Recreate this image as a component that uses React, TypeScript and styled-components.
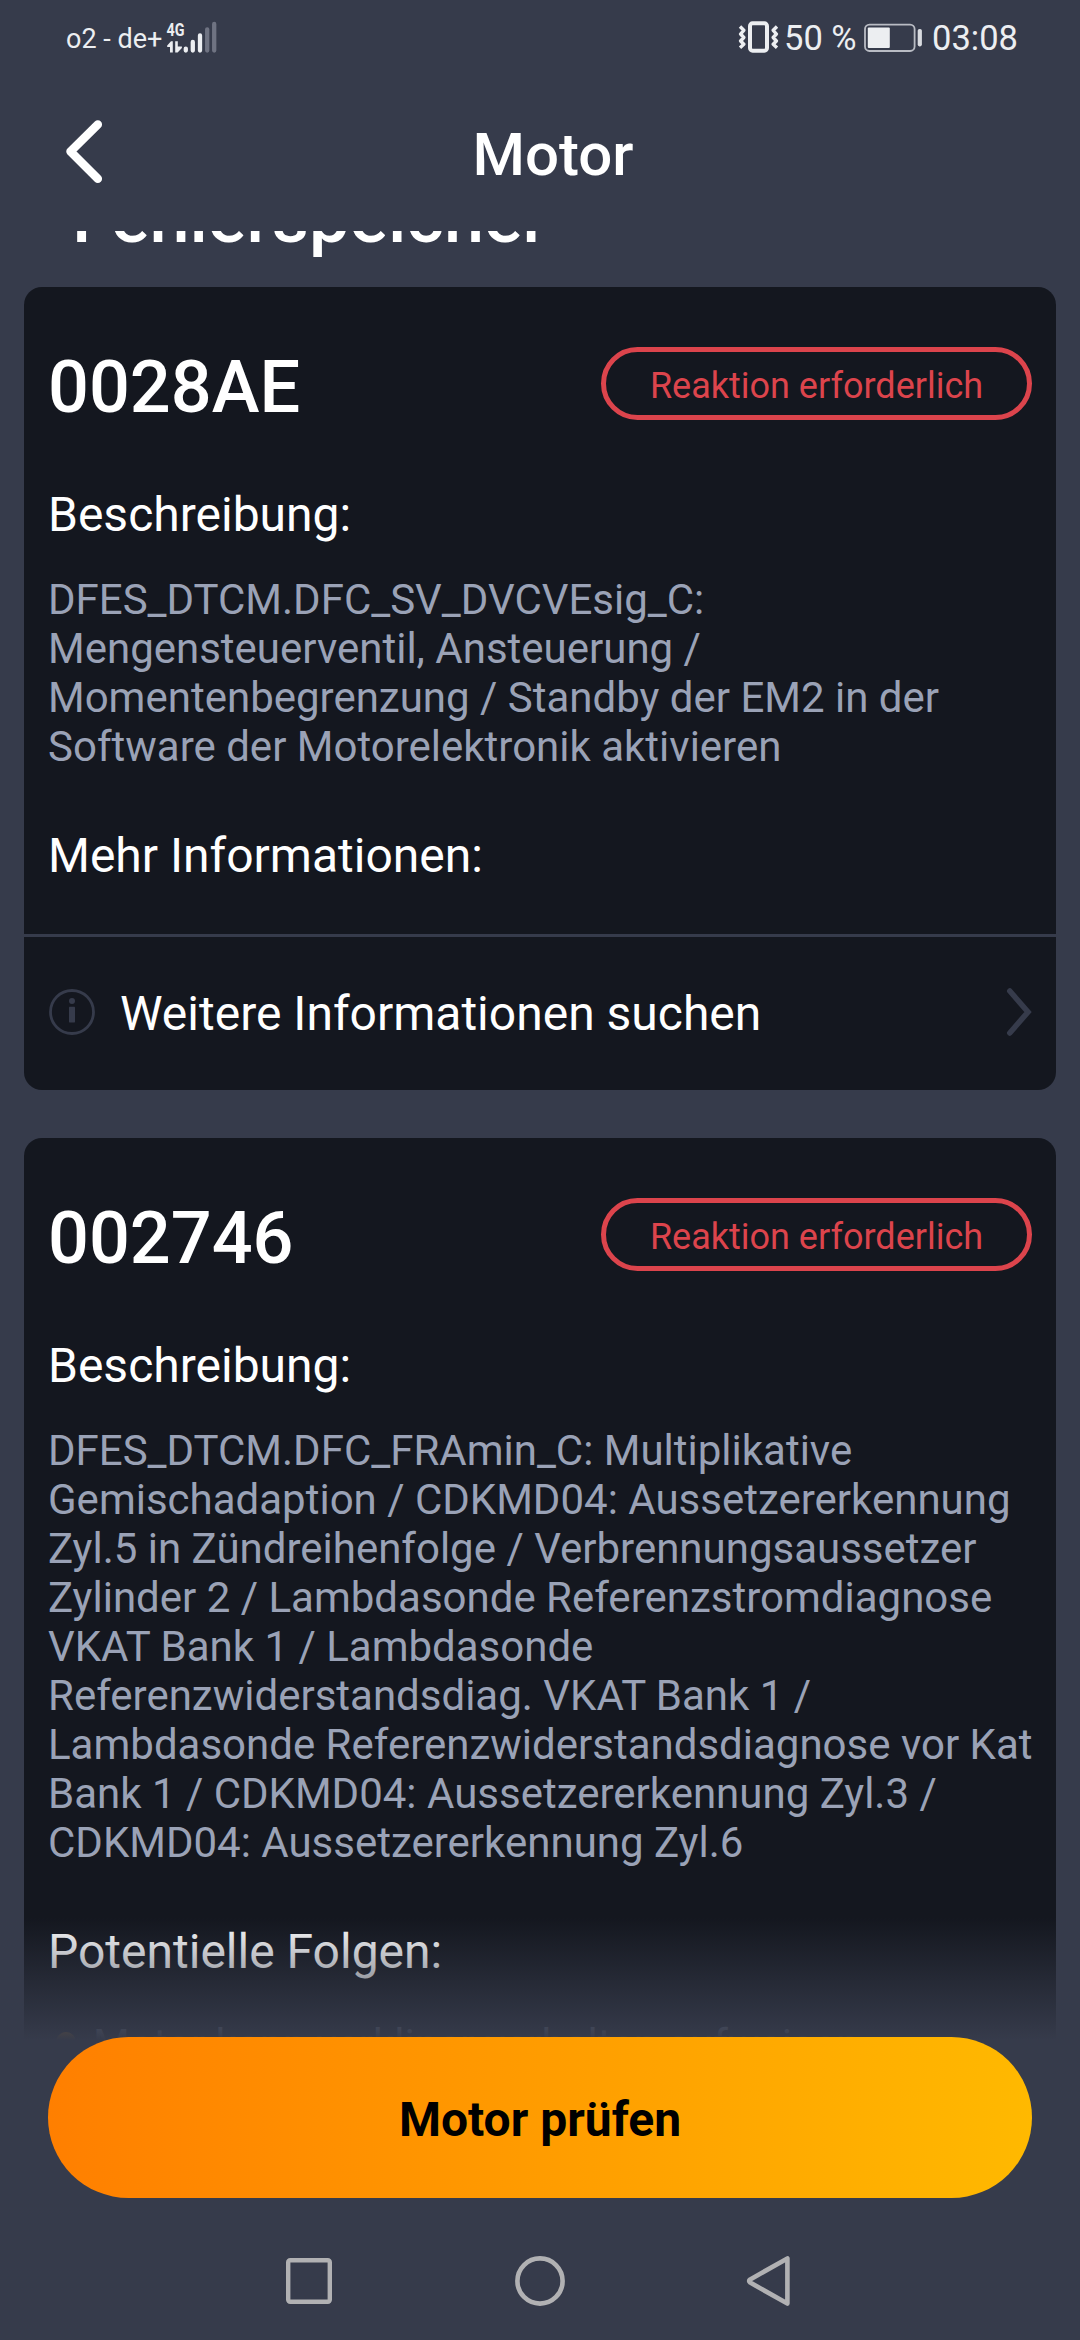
import React from "react";
import styled, { createGlobalStyle } from "styled-components";

const color = {
  page: "#363b4b",
  card: "#14171f",
  muted: "#9aa2b6",
  alert: "#dc444c",
  status: "#eceef1",
  nav: "#b1b1b3",
};

const GlobalStyle = createGlobalStyle`
  * { box-sizing: border-box; }
  body {
    margin: 0;
    background: ${color.page};
    font-family: Roboto, "Noto Sans", sans-serif;
    color: #fff;
  }
  h1, h2, h3, p, ul { margin: 0; padding: 0; }
`;

const Screen = styled.div`
  width: 1080px;
  height: 2340px;
  display: flex;
  flex-direction: column;
  overflow: hidden;
  background: ${color.page};
`;

const StatusBar = styled.div`
  height: 76px;
  padding: 0 64px 0 66px;
  display: flex;
  justify-content: space-between;
  color: ${color.status};
`;

const StatusGroup = styled.div`
  display: flex;
  align-items: flex-start;
`;

const Carrier = styled.span`
  width: 100px;
  padding-top: 23px;
  font-size: 27px;
  line-height: 32px;
  white-space: nowrap;
`;

const StatusText = styled.span<{ $width: number }>`
  width: ${(p) => p.$width}px;
  padding-top: 18px;
  font-size: 34.5px;
  line-height: 40px;
  white-space: nowrap;
`;

const StatusIcon = styled.svg<{ $gap?: number }>`
  flex: none;
  margin-top: 20px;
  margin-right: ${(p) => p.$gap ?? 0}px;
`;

const TitleBar = styled.header`
  height: 155px;
  padding: 0 64px;
  display: grid;
  grid-template-columns: 40px 1fr 40px;
  align-items: start;
`;

const BackIcon = styled.svg`
  margin-top: 42px;
`;

const Title = styled.h1`
  padding: 44px 0 0 26px;
  text-align: center;
  font-size: 60px;
  font-weight: 500;
  line-height: 70px;
`;

const ScrollArea = styled.main`
  position: relative;
  height: 1809px;
  flex: none;
  overflow: hidden;
  padding: 0 24px;
`;

const SectionHeading = styled.h2`
  margin: -55px 0 27px 48px;
  font-size: 72px;
  font-weight: 500;
  line-height: 84px;
`;

const Card = styled.section`
  margin-bottom: 48px;
  border-radius: 18px;
  background: ${color.card};
  overflow: hidden;
`;

const CardBody = styled.div`
  padding: 59px 20px 50px 24px;
`;

const CardHead = styled.div`
  display: flex;
  justify-content: space-between;
  align-items: flex-start;
  padding-right: 4px;
  margin-bottom: 57px;
`;

const Code = styled.h3`
  font-size: 72px;
  font-weight: 500;
  line-height: 84px;
`;

const Badge = styled.span`
  width: 431px;
  height: 73px;
  margin-top: 1px;
  padding-top: 4px;
  display: flex;
  align-items: center;
  justify-content: center;
  border: 5px solid ${color.alert};
  border-radius: 37px;
  color: ${color.alert};
  font-size: 36px;
  line-height: 42px;
  white-space: nowrap;
`;

const Label = styled.p`
  font-size: 48px;
  line-height: 56px;
`;

const Description = styled.p`
  margin: 32px 0 57px;
  color: ${color.muted};
  font-size: 42px;
  line-height: 49px;
  white-space: pre-line;
`;

const LinkRow = styled.div`
  height: 156px;
  padding: 0 24px;
  display: flex;
  align-items: center;
  border-top: 3px solid ${color.page};
`;

const LinkText = styled.span`
  flex: 1;
  margin-left: 24px;
  padding-top: 1px;
  font-size: 48px;
  line-height: 56px;
`;

const RowIcon = styled.svg`
  flex: none;
  margin-bottom: 3px;
`;

const Effects = styled.ul`
  margin-top: 40px;
  height: 120px;
  list-style: none;
`;

const Effect = styled.li`
  display: flex;
  color: ${color.muted};
  font-size: 42px;
  line-height: 49px;
  white-space: nowrap;

  &::before {
    content: "";
    flex: none;
    width: 20px;
    height: 20px;
    margin: 12px 17px 0 8px;
    border-radius: 50%;
    background: #ff9800;
  }
`;

const Fade = styled.div`
  position: absolute;
  left: 0;
  right: 0;
  bottom: 0;
  height: 122px;
  background: linear-gradient(rgba(54, 59, 75, 0), ${color.page});
`;

const Footer = styled.footer`
  position: relative;
  margin-top: -3px;
  padding: 0 48px;
`;

const PrimaryButton = styled.button`
  display: block;
  width: 100%;
  height: 161px;
  padding: 4px 0 0;
  border: 0;
  border-radius: 81px;
  background: linear-gradient(90deg, #ff7f00, #ffb900);
  color: #000;
  font-family: inherit;
  font-size: 48px;
  font-weight: 700;
  line-height: 56px;
`;

const NavBar = styled.nav`
  flex: 1;
  padding: 57px 288px 0 284px;
  display: flex;
  justify-content: space-between;
  align-items: flex-start;
`;

const SignalIcon = () => (
  <StatusIcon width="52" height="34" viewBox="0 0 52 34">
    <text x="0.5" y="15.6" fontFamily="Roboto, sans-serif" fontSize="18.5" fontWeight="700" textLength="18" lengthAdjust="spacingAndGlyphs" fill={color.status}>
      4G
    </text>
    <path d="M6.8 21.3V32.6H4V27H1.2V25.6L5 21.3Z" fill={color.status} />
    <path d="M9.2 21.3H11.8V26.6H15.9V28L11.6 32.6H9.2Z" fill={color.status} />
    <g strokeWidth="4.3" strokeLinecap="round" stroke={color.status}>
      <path d="M19.8 28.6V30.5M26.8 22V30.5M34 15.5V30.5" />
      <path d="M41.2 9.3V30.5M48.2 4V30.5" stroke="#6f7382" />
    </g>
  </StatusIcon>
);

const VibrateIcon = () => (
  <StatusIcon width="41" height="34" viewBox="0 0 41 34" $gap={5} fill="none" stroke={color.status}>
    <rect x="12" y="3.3" width="17" height="27.4" rx="2.6" strokeWidth="4" />
    <path
      d="M2 6.5L5.8 10.3L2.6 14L5.8 17.5L2.6 21L5.8 24.3L2 27.8M39 6.5L35.2 10.3L38.4 14L35.2 17.5L38.4 21L35.2 24.3L39 27.8"
      strokeWidth="3.4"
      strokeLinejoin="round"
    />
  </StatusIcon>
);

const BatteryIcon = () => (
  <StatusIcon width="60" height="34" viewBox="0 0 60 34" $gap={8}>
    <rect x="1" y="4.6" width="49.6" height="26.4" rx="4.5" fill="none" stroke="#b9bcc4" strokeWidth="1.8" />
    <rect x="3.8" y="7.6" width="22" height="20.4" rx="1" fill={color.status} />
    <rect x="53.7" y="9" width="4.2" height="17.4" rx="1.8" fill="#d9dbe0" />
  </StatusIcon>
);

interface Fault {
  code: string;
  description: string;
}

const faults: Fault[] = [
  {
    code: "0028AE",
    description:
      "DFES_DTCM.DFC_SV_DVCVEsig_C:\nMengensteuerventil, Ansteuerung /\nMomentenbegrenzung / Standby der EM2 in der\nSoftware der Motorelektronik aktivieren",
  },
  {
    code: "002746",
    description:
      "DFES_DTCM.DFC_FRAmin_C: Multiplikative\nGemischadaption / CDKMD04: Aussetzererkennung\nZyl.5 in Zündreihenfolge / Verbrennungsaussetzer\nZylinder 2 / Lambdasonde Referenzstromdiagnose\nVKAT Bank 1 / Lambdasonde\nReferenzwiderstandsdiag. VKAT Bank 1 /\nLambdasonde Referenzwiderstandsdiagnose vor Kat\nBank 1 / CDKMD04: Aussetzererkennung Zyl.3 /\nCDKMD04: Aussetzererkennung Zyl.6",
  },
];

const FaultDetails = ({ fault, children }: { fault: Fault; children: React.ReactNode }) => (
  <CardBody>
    <CardHead>
      <Code>{fault.code}</Code>
      <Badge>Reaktion erforderlich</Badge>
    </CardHead>
    <Label>Beschreibung:</Label>
    <Description>{fault.description}</Description>
    {children}
  </CardBody>
);

export default function App() {
  return (
    <>
      <GlobalStyle />
      <Screen>
        <StatusBar>
          <StatusGroup>
            <Carrier>o2 - de+</Carrier>
            <SignalIcon />
          </StatusGroup>
          <StatusGroup>
            <VibrateIcon />
            <StatusText $width={80}>50 %</StatusText>
            <BatteryIcon />
            <StatusText $width={84}>03:08</StatusText>
          </StatusGroup>
        </StatusBar>

        <TitleBar>
          <BackIcon width="40" height="66" viewBox="0 0 40 66" fill="none" stroke="#fff" strokeWidth="8.5" strokeLinecap="round" strokeLinejoin="round">
            <path d="M33.8 6.5L6.5 33.5L33.8 60.7" />
          </BackIcon>
          <Title>Motor</Title>
        </TitleBar>

        <ScrollArea>
          <SectionHeading>Fehlerspeicher</SectionHeading>

          <Card>
            <FaultDetails fault={faults[0]}>
              <Label>Mehr Informationen:</Label>
            </FaultDetails>
            <LinkRow>
              <RowIcon width="48" height="48" viewBox="0 0 48 48">
                <circle cx="24" cy="24" r="21.5" fill="none" stroke={color.page} strokeWidth="2.8" />
                <circle cx="24" cy="13" r="3" fill={color.page} />
                <rect x="21" y="18.8" width="6" height="15.6" rx="0.6" fill={color.page} />
              </RowIcon>
              <LinkText>Weitere Informationen suchen</LinkText>
              <RowIcon width="26" height="50" viewBox="0 0 26 50" fill="none" stroke={color.page} strokeWidth="5.6" strokeLinecap="round">
                <path d="M3.8 4L22 25L3.8 46" />
              </RowIcon>
            </LinkRow>
          </Card>

          <Card>
            <FaultDetails fault={faults[1]}>
              <Label>Potentielle Folgen:</Label>
              <Effects>
                <Effect>Motor kann verkliner verhalten aufweisen</Effect>
              </Effects>
            </FaultDetails>
          </Card>
          <Fade />
        </ScrollArea>

        <Footer>
          <PrimaryButton>Motor prüfen</PrimaryButton>
        </Footer>

        <NavBar>
          <svg width="50" height="52" viewBox="0 0 50 52" fill="none" stroke={color.nav} strokeWidth="4.4">
            <rect x="4.2" y="5.2" width="41.6" height="41.6" rx="2" />
          </svg>
          <svg width="52" height="52" viewBox="0 0 52 52" fill="none" stroke={color.nav} strokeWidth="4.6">
            <circle cx="26" cy="26" r="22.6" />
          </svg>
          <svg width="46" height="52" viewBox="0 0 46 52" fill="none" stroke={color.nav} strokeWidth="4.6" strokeLinejoin="round">
            <path d="M41.4 3.4V48.6L4.2 27.6Q2 26 4.2 24.4Z" />
          </svg>
        </NavBar>
      </Screen>
    </>
  );
}
